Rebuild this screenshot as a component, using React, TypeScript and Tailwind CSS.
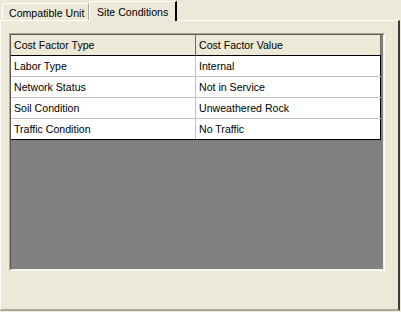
import React from "react";

const rows = [
  ["Labor Type", "Internal"],
  ["Network Status", "Not in Service"],
  ["Soil Condition", "Unweathered Rock"],
  ["Traffic Condition", "No Traffic"],
];

export default function App() {
  return (
    <div
      className="w-[401px] h-[312px] bg-[#ECE9D8] text-[10.6px] text-black overflow-hidden"
      style={{ fontFamily: '"Liberation Sans", Arial, sans-serif' }}
    >
      {/* tabs */}
      <div className="flex items-end h-[20px] pl-[2px]">
        <div className="h-[17px] w-[87px] border-l border-t border-white rounded-tl-[2px] border-r border-r-[#ACA899] flex items-center pt-[2px] pl-[6px] leading-none whitespace-nowrap">
          Compatible Unit
        </div>
        <div className="relative z-10 h-[20px] -mb-px w-[88px] border-l border-t border-white rounded-tl-[2px] border-r-2 border-r-[#000000] bg-[#ECE9D8] flex items-start pt-[5px] pl-[7px] leading-none whitespace-nowrap">
          Site Conditions
        </div>
      </div>
      {/* panel */}
      <div className="w-[400px] h-[291px] border-t border-l border-white border-r-2 border-r-[#3a3a3a] border-b-2 border-b-[#ACA899] pl-[8px] pt-[12px]">
        <div className="w-[376px] h-[238px] border-t border-l border-[#ACA899] border-b border-r border-b-white border-r-white">
          <div className="w-full h-full border-t border-l border-[#5a5a52] border-b border-r border-b-[#F1EFE2] border-r-[#F1EFE2] bg-[#808080]">
            <div className="w-[370px]">
              <div className="flex h-[21px] bg-[#ECE9D8] border-b border-black">
                <div className="w-[185px] border-r border-r-[#716F64] pl-[3px] pt-[2px] flex items-center">
                  Cost Factor Type
                </div>
                <div className="flex-1 border-r border-r-[#716F64] pl-[3px] pt-[2px] flex items-center">
                  Cost Factor Value
                </div>
              </div>
              {rows.map((r, i) => (
                <div
                  key={r[0]}
                  className={
                    "flex h-[21px] bg-white border-b " +
                    (i === rows.length - 1 ? "border-black" : "border-[#C0C0C0]")
                  }
                >
                  <div className="w-[185px] border-r border-r-[#C0C0C0] pl-[3px] pt-[2px] flex items-center">
                    {r[0]}
                  </div>
                  <div className="flex-1 border-r border-r-black pl-[3px] pt-[2px] flex items-center">
                    {r[1]}
                  </div>
                </div>
              ))}
            </div>
          </div>
        </div>
      </div>
    </div>
  );
}
